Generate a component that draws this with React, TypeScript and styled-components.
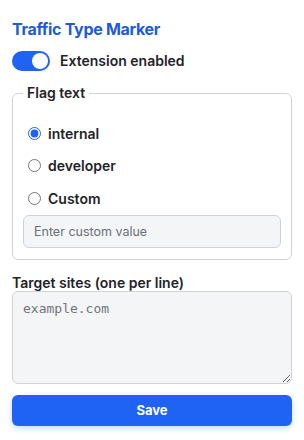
import React, { useState } from 'react';
import styled, { createGlobalStyle } from 'styled-components';

const GlobalStyle = createGlobalStyle`
    html, body {
        margin: 0;
        background: #ffffff;
    }

    body {
        font-family: Inter, "Liberation Sans", "Noto Sans", sans-serif;
        color: #1f2328;
    }
`;

const Panel = styled.div`
    width: 280px;
    padding: 19px 12px 14px;
    display: flex;
    flex-direction: column;
`;

const Title = styled.h1`
    margin: 0;
    font-size: 16px;
    line-height: 20px;
    font-weight: 700;
    letter-spacing: -0.3px;
    color: #1e5bd8;
`;

const ToggleRow = styled.label`
    display: flex;
    align-items: center;
    gap: 10px;
    margin-top: 12px;
    font-size: 14px;
    font-weight: 600;
    line-height: 20px;
    cursor: pointer;
`;

const Track = styled.span<{ $on: boolean }>`
    width: 38px;
    height: 20px;
    border-radius: 10px;
    background: ${p => (p.$on ? '#1f63f5' : '#c7cbd1')};
    display: flex;
    align-items: center;
    justify-content: ${p => (p.$on ? 'flex-end' : 'flex-start')};
    padding: 0 2px;
    box-sizing: border-box;
    flex-shrink: 0;

    &::after {
        content: '';
        width: 16px;
        height: 16px;
        border-radius: 50%;
        background: #ffffff;
    }
`;

const FlagSet = styled.fieldset`
    margin: 13px 0 0;
    padding: 0 10px 11px;
    border: 1px solid #cfd3d9;
    border-radius: 6px;
`;

const Legend = styled.legend`
    padding: 0 4px;
    font-size: 14px;
    font-weight: 600;
    line-height: 18px;
`;

const Options = styled.div`
    display: flex;
    flex-direction: column;
    margin-top: 15px;
`;

const Option = styled.label`
    display: flex;
    align-items: center;
    gap: 4px;
    height: 32.5px;
    font-size: 14px;
    font-weight: 600;
    cursor: pointer;

    input {
        margin: 0 3px 0 5px;
        accent-color: #1f63f5;
    }
`;

const TextField = styled.input`
    width: 100%;
    height: 33px;
    box-sizing: border-box;
    padding: 0 10px;
    border: 1px solid #cfd3d9;
    border-radius: 6px;
    background: #f4f5f7;
    font-family: inherit;
    font-size: 12.5px;
    color: #1f2328;

    &::placeholder {
        color: #6b7079;
    }
`;

const SitesLabel = styled.label`
    margin-top: 14px;
    font-size: 14px;
    font-weight: 600;
    line-height: 17px;
`;

const Sites = styled.textarea`
    width: 100%;
    height: 93px;
    box-sizing: border-box;
    padding: 8px 10px;
    border: 1px solid #cfd3d9;
    border-radius: 6px;
    background: #f4f5f7;
    font-family: "DejaVu Sans Mono", "Liberation Mono", monospace;
    font-size: 13px;
    line-height: 17px;
    color: #1f2328;
    resize: vertical;

    &::placeholder {
        color: #70747b;
    }
`;

const SaveButton = styled.button`
    margin-top: 11px;
    height: 31px;
    width: 100%;
    border: none;
    border-radius: 6px;
    background: #1f63f5;
    color: #ffffff;
    font-family: inherit;
    font-size: 13px;
    font-weight: 700;
    box-shadow: 0 2px 6px rgba(31, 99, 245, 0.25);
    cursor: pointer;
`;

const flagOptions = ['internal', 'developer', 'Custom'];

export default function App() {
    const [enabled, setEnabled] = useState(true);
    const [flag, setFlag] = useState('internal');

    return (
        <React.Fragment>
            <GlobalStyle />
            <Panel>
                <Title>Traffic Type Marker</Title>
                <ToggleRow onClick={() => setEnabled(!enabled)}>
                    <Track $on={enabled} />
                    Extension enabled
                </ToggleRow>
                <FlagSet>
                    <Legend>Flag text</Legend>
                    <Options>
                        {flagOptions.map(option => (
                            <Option key={`flag-${option}`}>
                                <input
                                    type='radio'
                                    name='flag'
                                    checked={flag === option}
                                    onChange={() => setFlag(option)}
                                />
                                {option}
                            </Option>
                        ))}
                    </Options>
                    <TextField placeholder='Enter custom value' />
                </FlagSet>
                <SitesLabel>Target sites (one per line)</SitesLabel>
                <Sites placeholder='example.com' />
                <SaveButton>Save</SaveButton>
            </Panel>
        </React.Fragment>
    );
}
